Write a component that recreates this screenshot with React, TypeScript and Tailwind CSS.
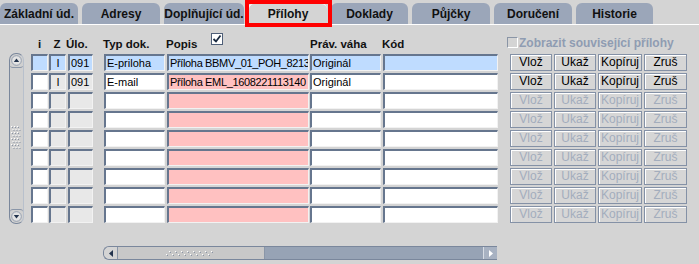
import React from "react";

const tabs = [
  { label: "Základní úd.", w: 78 },
  { label: "Adresy", w: 78 },
  { label: "Doplňující úd.", w: 80 },
  { label: "Přílohy", w: 79, active: true },
  { label: "Doklady", w: 77 },
  { label: "Půjčky", w: 78 },
  { label: "Doručení", w: 78 },
  { label: "Historie", w: 77 },
];

type Row = {
  sel?: boolean;
  filled?: boolean;
  z?: string;
  ulo?: string;
  typ?: string;
  popis?: string;
  prav?: string;
};

const rows: Row[] = [
  { sel: true, filled: true, z: "I", ulo: "091", typ: "E-priloha", popis: "Příloha BBMV_01_POH_8213", prav: "Originál" },
  { filled: true, z: "I", ulo: "091", typ: "E-mail", popis: "Příloha EML_1608221113140", prav: "Originál" },
  {}, {}, {}, {}, {}, {}, {},
];

function Cell({ w, bg, children, center, tight }: { w: string; bg: string; children?: React.ReactNode; center?: boolean; tight?: boolean }) {
  return (
    <div
      className={`${w} ${bg} h-[17px] shrink-0 border-t-2 border-l-2 border-t-[#66768e] border-l-[#66768e] border-r border-b border-r-[#f2f2f2] border-b-[#f2f2f2] text-[11px] leading-[14px] text-black overflow-hidden whitespace-nowrap ${center ? "text-center" : "pl-[1px]"} ${tight ? "tracking-[-0.35px]" : ""}`}
    >
      {children}
    </div>
  );
}

function Btn({ label, w, enabled }: { label: string; w: string; enabled: boolean }) {
  return (
    <div
      className={`${w} h-[17px] shrink-0 border border-[#8491a6] shadow-[inset_1px_1px_0_#ffffff] bg-[#d6d6d6] text-[12px] leading-[15px] text-center ${enabled ? "text-black" : "text-[#a3adbd]"}`}
    >
      {label}
    </div>
  );
}

function Dots({ cols, rows: r }: { cols: number; rows: number }) {
  const items = [];
  for (let y = 0; y < r; y++) {
    for (let x = 0; x < cols; x++) {
      items.push(<rect key={`${x}-${y}`} x={x * 3 + (y % 2) * 1.5} y={y * 3} width="1" height="1" fill="#ffffff" />);
      items.push(<rect key={`s${x}-${y}`} x={x * 3 + (y % 2) * 1.5 + 1} y={y * 3 + 1} width="1" height="1" fill="#8a94a5" />);
    }
  }
  return (
    <svg width={cols * 3 + 2} height={r * 3 + 1}>
      {items}
    </svg>
  );
}

export default function App() {
  return (
    <div
      className="relative w-[699px] h-[264px] overflow-hidden bg-[#d4d4d4]"
      style={{ fontFamily: '"Liberation Sans", Arial, sans-serif' }}
    >
      {/* Tabs */}
      <div className="flex items-end gap-[4px] h-[24px]">
        {tabs.map((t) => (
          <div
            key={t.label}
            className={`h-[21px] shrink-0 rounded-t-[6px] flex items-center justify-center text-[12px] font-bold text-[#111] ${
              t.active ? "bg-[#d4d4d4] border-t border-l border-white" : "bg-[#9ba6b9]"
            }`}
            style={{ width: t.w }}
          >
            {t.label}
          </div>
        ))}
      </div>
      <div className="h-[1px] bg-white" />

      {/* red highlight */}
      <div className="absolute left-[245px] top-0 w-[87px] h-[27px] border-[4px] border-[#ff0000]" />

      {/* Panel */}
      <div className="pt-[8px]">
        {/* Header */}
        <div className="flex h-[21px] text-[11.5px] font-bold text-[#111]">
          <div className="w-[31px] shrink-0" />
          <div className="w-[17px] shrink-0 pt-[3px] text-center">i</div>
          <div className="w-[18px] shrink-0 pt-[3px] text-center">Z</div>
          <div className="w-[37px] shrink-0 pt-[3px]">Úlo.</div>
          <div className="w-[63px] shrink-0 pt-[3px]">Typ dok.</div>
          <div className="w-[45px] shrink-0 pt-[3px]">Popis</div>
          <div className="w-[99px] shrink-0">
            <div className="w-[12px] h-[12px] bg-white border border-[#4f5f78] flex items-center justify-center">
              <svg width="10" height="10" viewBox="0 0 10 10">
                <path d="M1.5 5 L4 7.5 L8.5 1.5" stroke="#1a2a40" strokeWidth="1.8" fill="none" />
              </svg>
            </div>
          </div>
          <div className="w-[72px] shrink-0 pt-[3px]">Práv. váha</div>
          <div className="w-[125px] shrink-0 pt-[3px]">Kód</div>
          <div className="flex items-start gap-[1px] pt-[4px]">
            <div className="w-[11px] h-[11px] border border-[#8a95a6] border-r-white border-b-white bg-[#d4d4d4]" />
            <span className="text-[12px] leading-[12px] text-[#8f9cb2]">Zobrazit související přílohy</span>
          </div>
        </div>

        {/* Rows with vertical scrollbar */}
        <div className="flex">
          <div className="w-[9px] shrink-0" />
          <div className="w-[15px] h-[171px] -mt-[1px] shrink-0 rounded-[7px] border border-[#7a879c] border-r-[#b8c0cc] bg-[#d0d0d0] flex flex-col justify-between items-center">
            <div className="w-[13px] h-[14px] rounded-t-[7px] rounded-b-[3px] border-b border-[#8a96a8] flex items-center justify-center">
              <svg width="11" height="11" viewBox="0 0 11 11">
                <circle cx="5.5" cy="5.5" r="4.8" fill="#e4e4e4" stroke="#8491a5" strokeWidth="0.8" />
                <path d="M2.8 7 L5.5 3.6 L8.2 7 Z" fill="#22334d" />
              </svg>
            </div>
            <Dots cols={3} rows={8} />
            <div className="w-[13px] h-[14px] rounded-b-[7px] rounded-t-[3px] border-t border-[#8a96a8] flex items-center justify-center">
              <svg width="11" height="11" viewBox="0 0 11 11">
                <circle cx="5.5" cy="5.5" r="4.8" fill="#e4e4e4" stroke="#8491a5" strokeWidth="0.8" />
                <path d="M2.8 4 L5.5 7.4 L8.2 4 Z" fill="#22334d" />
              </svg>
            </div>
          </div>
          <div className="w-[7px] shrink-0" />
          <div className="flex flex-col gap-[2px]">
            {rows.map((r, i) => {
              const blue = "bg-[#bfdcff]";
              const iBg = r.sel ? blue : "bg-white";
              const grey = r.sel ? blue : "bg-[#e8e8e8]";
              const white = r.sel ? blue : "bg-white";
              const pink = r.sel ? blue : "bg-[#ffc1c1]";
              const en = !!r.filled;
              return (
                <div key={i} className="flex">
                  <Cell w="w-[17px]" bg={iBg} />
                  <div className="w-[1px] shrink-0" />
                  <Cell w="w-[17px]" bg={grey} center>{r.z}</Cell>
                  <div className="w-[2px] shrink-0" />
                  <Cell w="w-[25px]" bg={grey}>{r.ulo}</Cell>
                  <div className="w-[11px] shrink-0" />
                  <Cell w="w-[61px]" bg={white}>{r.typ}</Cell>
                  <div className="w-[2px] shrink-0" />
                  <Cell w="w-[142px]" bg={pink} tight>{r.popis}</Cell>
                  <div className="w-[1px] shrink-0" />
                  <Cell w="w-[71px]" bg={white}>{r.prav}</Cell>
                  <div className="w-[2px] shrink-0" />
                  <Cell w="w-[115px]" bg={white} />
                  <div className="w-[12px] shrink-0" />
                  <div className="flex gap-[2px]">
                    <Btn label="Vlož" w="w-[42px]" enabled={en} />
                    <Btn label="Ukaž" w="w-[42px]" enabled={en} />
                    <Btn label="Kopíruj" w="w-[44px]" enabled={en} />
                    <Btn label="Zruš" w="w-[43px]" enabled={en} />
                  </div>
                </div>
              );
            })}
          </div>
        </div>

        {/* Horizontal scrollbar */}
        <div className="flex mt-[22px] ml-[103px]">
          <div className="flex w-[394px] h-[14px] rounded-l-[6px] overflow-hidden border border-[#7a879c] border-r-0">
            <div className="w-[14px] h-full bg-[#d4d4d4] border-r border-[#8a96a8] flex items-center justify-center rounded-l-[6px]">
              <svg width="8" height="9" viewBox="0 0 8 9">
                <path d="M6 1 L2 4.5 L6 8 Z" fill="#22334d" />
              </svg>
            </div>
            <div className="w-[147px] h-full bg-[#c8c8c8] border-r border-[#8a96a8] flex items-center justify-center">
              <svg width="50" height="7" viewBox="0 0 50 7">
                {[0, 1, 2, 3, 4, 5, 6, 7].map((k) => (
                  <g key={k}>
                    <rect x={k * 6 + 3} y={1} width="1" height="1" fill="#ffffff" />
                    <rect x={k * 6 + 4} y={2} width="1" height="1" fill="#8a94a5" />
                    <rect x={k * 6} y={4} width="1" height="1" fill="#ffffff" />
                    <rect x={k * 6 + 1} y={5} width="1" height="1" fill="#8a94a5" />
                  </g>
                ))}
              </svg>
            </div>
            <div className="flex-1 h-full bg-[#97a3b5]" />
            <div className="w-[14px] h-full bg-[#a8b2c2] border-l border-[#d8dde5] flex items-center justify-center">
              <svg width="8" height="9" viewBox="0 0 8 9">
                <path d="M2 1 L6 4.5 L2 8 Z" fill="#ffffff" />
              </svg>
            </div>
          </div>
        </div>
      </div>
    </div>
  );
}
